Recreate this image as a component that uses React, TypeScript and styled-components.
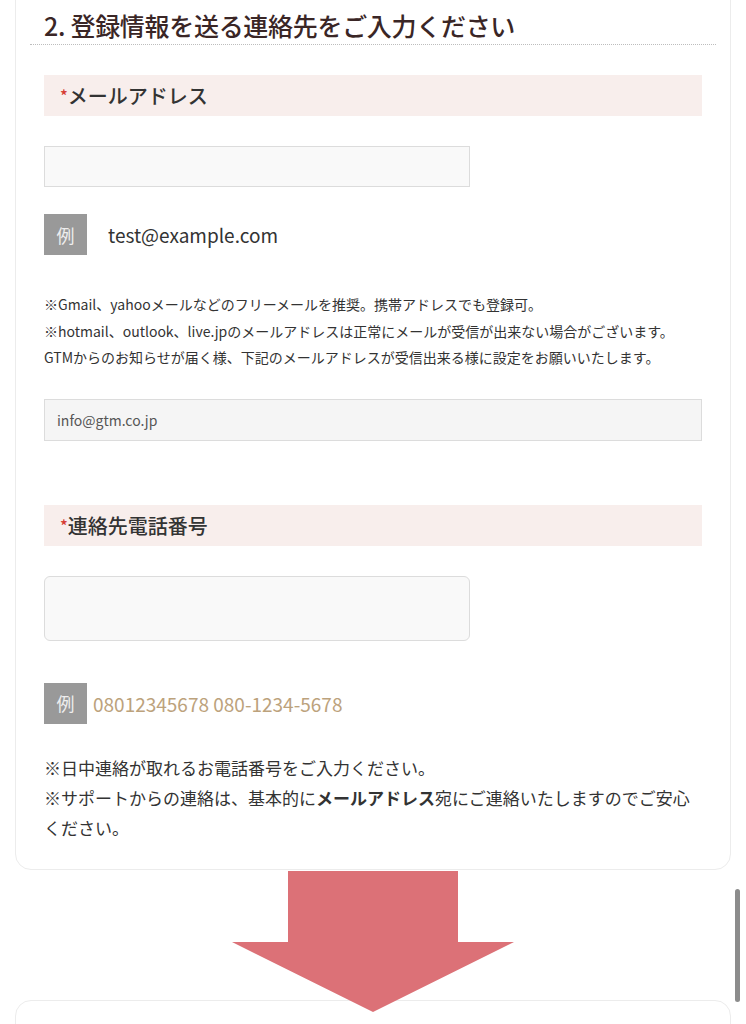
import React from "react";
import styled, { createGlobalStyle } from "styled-components";

const Global = createGlobalStyle`
  html, body { margin: 0; padding: 0; background: #fff; }
  body {
    font-family: "Noto Sans CJK JP", "Noto Sans", sans-serif;
    color: #333;
    overflow: hidden;
  }
  * { box-sizing: border-box; }
`;

const Page = styled.div`
  width: 746px;
  height: 1024px;
  overflow: hidden;
  display: flex;
  flex-direction: column;
`;

const Card = styled.section<{ $top?: boolean }>`
  margin: ${(p) => (p.$top ? "-23px 15px 0" : "0 15px")};
  border: 1px solid #ececec;
  border-radius: 16px;
  background: #fff;
  padding: ${(p) => (p.$top ? "30px 14px 26px" : "0 14px")};
  min-height: ${(p) => (p.$top ? "auto" : "200px")};
  flex-shrink: 0;
`;

const Heading = styled.h2`
  margin: 0;
  padding: 0 14px 1px;
  font-size: 25px;
  line-height: 35px;
  font-weight: 500;
  color: #3a2626;
  border-bottom: 1px dotted #bdbdbd;
  letter-spacing: -0.3px;
`;

const Body = styled.div`
  padding: 0 14px;
  display: flex;
  flex-direction: column;
`;

const Label = styled.div<{ $gap: number }>`
  margin-top: ${(p) => p.$gap}px;
  height: 41px;
  background: #f8eeec;
  padding-left: 16px;
  display: flex;
  align-items: center;
  font-size: 20px;
  font-weight: 500;
  color: #333;
`;

const Req = styled.span`
  color: #d63b33;
  font-size: 16px;
  align-self: flex-start;
  margin-top: 8px;
`;

const Input = styled.div<{ $h: number; $r: number }>`
  margin-top: 30px;
  width: 426px;
  height: ${(p) => p.$h}px;
  border: 1px solid #dcdcdc;
  border-radius: ${(p) => p.$r}px;
  background: #f9f9f9;
`;

const ReadOnly = styled.div`
  margin-top: 28px;
  height: 42px;
  border: 1px solid #dcdcdc;
  background: #f5f5f5;
  padding-left: 12px;
  display: flex;
  align-items: center;
  font-size: 14px;
  color: #555;
`;

const ExRow = styled.div<{ $gap: number; $textGap: number }>`
  margin-top: ${(p) => p.$gap}px;
  display: flex;
  align-items: center;
  gap: ${(p) => p.$textGap}px;
`;

const Badge = styled.span`
  width: 43px;
  height: 41px;
  background: #999;
  color: #eee;
  font-size: 18px;
  display: flex;
  align-items: center;
  justify-content: center;
`;

const ExText = styled.span<{ $tan?: boolean }>`
  font-size: 19px;
  color: ${(p) => (p.$tan ? "#bca27c" : "#333")};
`;

const Note = styled.p<{ $size: number; $lh: number; $gap: number }>`
  margin: ${(p) => p.$gap}px 0 0;
  font-size: ${(p) => p.$size}px;
  line-height: ${(p) => p.$lh}px;
  color: #333;
`;

const ArrowWrap = styled.div`
  position: relative;
  z-index: 2;
  display: flex;
  justify-content: center;
  margin-top: 1px;
  margin-bottom: -12px;
  flex-shrink: 0;
`;

const ScrollThumb = styled.div`
  position: fixed;
  left: 735px;
  top: 889px;
  width: 5px;
  height: 113px;
  border-radius: 3px;
  background: #8c8c8c;
  z-index: 3;
`;

export default function App() {
  return (
    <Page>
      <Global />
      <Card $top>
        <Heading>2. 登録情報を送る連絡先をご入力ください</Heading>
        <Body>
          <Label $gap={30}>
            <Req>*</Req>メールアドレス
          </Label>
          <Input $h={41} $r={0} />
          <ExRow $gap={27} $textGap={21}>
            <Badge>例</Badge>
            <ExText>test@example.com</ExText>
          </ExRow>
          <Note $size={14} $lh={26.5} $gap={36}>
            ※Gmail、yahooメールなどのフリーメールを推奨。携帯アドレスでも登録可。
            <br />
            ※hotmail、outlook、live.jpのメールアドレスは正常にメールが受信が出来ない場合がございます。
            <br />
            GTMからのお知らせが届く様、下記のメールアドレスが受信出来る様に設定をお願いいたします。
          </Note>
          <ReadOnly>info@gtm.co.jp</ReadOnly>
          <Label $gap={64}>
            <Req>*</Req>連絡先電話番号
          </Label>
          <Input $h={65} $r={6} />
          <ExRow $gap={42} $textGap={6}>
            <Badge>例</Badge>
            <ExText $tan>08012345678 080-1234-5678</ExText>
          </ExRow>
          <Note $size={17} $lh={30} $gap={29}>
            ※日中連絡が取れるお電話番号をご入力ください。
            <br />
            ※サポートからの連絡は、基本的に<b>メールアドレス</b>宛にご連絡いたしますのでご安心ください。
          </Note>
        </Body>
      </Card>
      <ArrowWrap>
        <svg width="282" height="141" viewBox="0 0 282 141">
          <polygon
            points="56,0 226,0 226,71 282,71 141,141 0,71 56,71"
            fill="#dc7177"
          />
        </svg>
      </ArrowWrap>
      <Card />
      <ScrollThumb />
    </Page>
  );
}
